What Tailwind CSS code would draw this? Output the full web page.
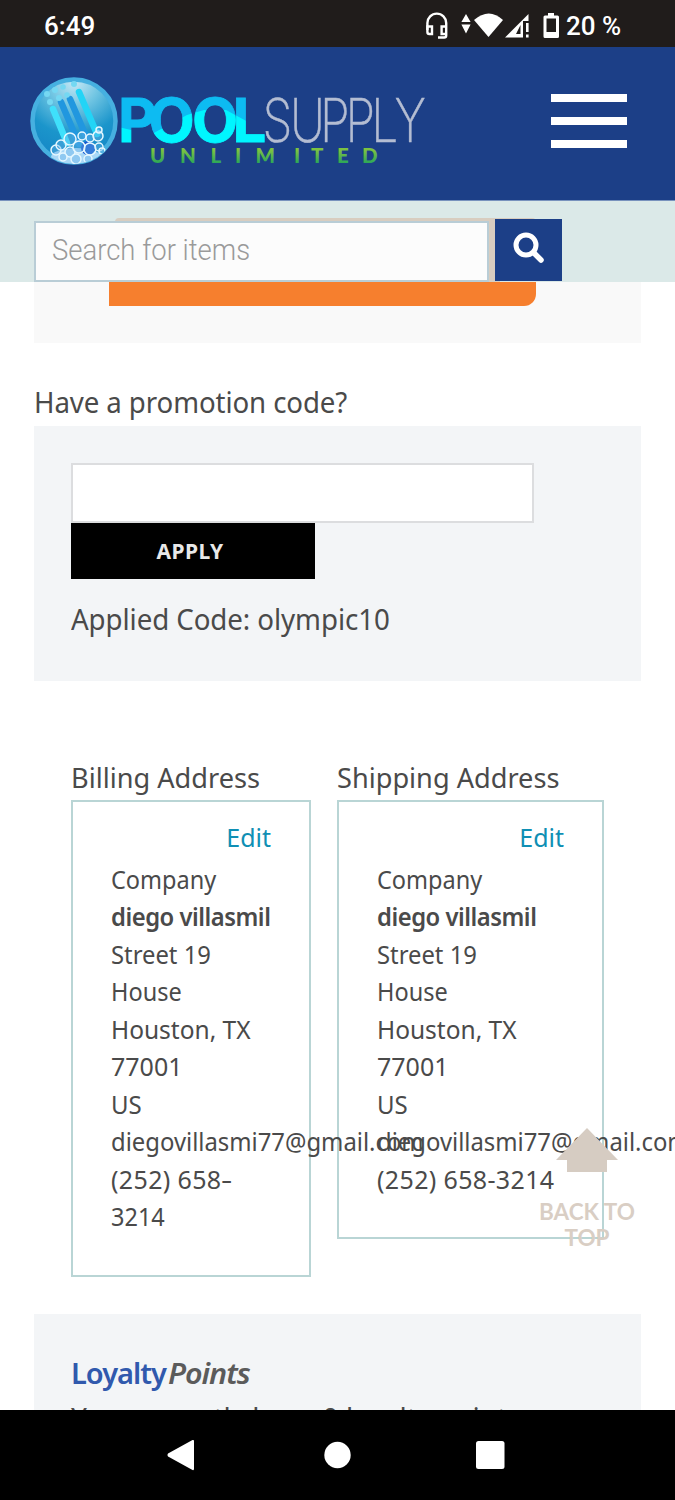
<!DOCTYPE html>
<html lang="en">
<head>
<meta charset="utf-8">
<meta name="viewport" content="width=device-width, initial-scale=1">
<title>Pool Supply Unlimited - Checkout</title>
<script src="https://cdn.jsdelivr.net/npm/@tailwindcss/browser@4"></script>
</head>
<body class="bg-white">
<div class="relative flex h-[1500px] w-[675px] flex-col overflow-hidden font-['Noto_Sans',sans-serif] text-[#4a4a4a]">

  <!-- Status bar -->
  <div class="flex h-[47px] shrink-0 items-center bg-[#201c1b] pt-1.5 pl-11 font-[Roboto,sans-serif] text-[26px] font-medium text-white">
    <span class="w-[382px]">6:49</span>
    <svg class="h-9 w-[138px] shrink-0" viewBox="426 9 138 36" fill="#fff">
      <g fill="none" stroke="#fff" stroke-width="2.4">
        <path d="M427.400 30V23a9.400 9.400 0 0 1 18.800 0V35.500q0 2-2 2H438"/>
        <path d="M427.400 26.500h4.600v7.500h-2.600q-2 0-2-2zM446.200 26.500h-4.600v7.500h4.600"/>
      </g>
      <path d="M466 14l4.600 8h-9.200zM466 33.500l4.600-9h-9.200z"/>
      <path d="M474 20q15-13 29 0L488.500 37z"/>
      <path fill-rule="evenodd" d="M505 37.500L528.500 14v7h-5.500v16.500zM516 34h4.500V25zM526 23h2.600v9H526zM526 34.500h2.600v3H526z"/>
      <path fill-rule="evenodd" d="M548 13h6v2.500h3.500q1.500 0 1.500 1.500v19.500q0 1.500-1.500 1.500H545q-1.500 0-1.500-1.500V17q0-1.500 1.500-1.500h3zM546.500 18.500V32h9.500V18.500z"/>
    </svg>
    <span class="ml-0.5 whitespace-nowrap">20 %</span>
  </div>

  <!-- Site header -->
  <header class="flex h-[154px] shrink-0 items-center justify-between border-b border-[#7892bd] bg-[#1c3f87] pr-12 pb-[5px] pl-6">
    <svg class="h-[110px] w-[410px]" viewBox="24 66 410 110">
      <defs>
        <radialGradient id="ball" cx=".5" cy=".02" r="1"><stop offset="0" stop-color="#c8e8f5"/><stop offset=".3" stop-color="#72c6e3"/><stop offset=".65" stop-color="#1b95cb"/><stop offset="1" stop-color="#1585c5"/></radialGradient>
        <pattern id="pool" patternUnits="userSpaceOnUse" x="110" y="80" width="170" height="90"><rect width="170" height="90" fill="#0dbbf2"/><path fill="#00f6ff" d="M0 45L21 50L40 55L77 35L94 30H116L140 43L170 49V90H0z"/></pattern>
        <linearGradient id="green" x1="0" y1="0" x2="0" y2="1"><stop offset=".3" stop-color="#7cc242"/><stop offset=".9" stop-color="#22a45a"/></linearGradient>
        <clipPath id="disc"><circle cx="74" cy="121" r="43"/></clipPath>
      </defs>
      <circle cx="74" cy="121" r="41.500" fill="url(#ball)" stroke="#46b0e0" stroke-width="4.500"/>
      <g clip-path="url(#disc)">
        <g stroke-linecap="round" stroke-width="6.500" fill="none">
          <path stroke="#3fe0fb" d="M53 109l14 34"/>
          <path stroke="#2197df" d="M61 102l18 42M70 99l19 44"/>
          <path stroke="#22d4f6" d="M79 92l18 42"/>
        </g>
        <g fill="#75d8f2"><circle cx="47" cy="94" r="3"/><circle cx="50" cy="102" r="3"/><circle cx="55" cy="90" r="3"/><circle cx="59" cy="98" r="3"/><circle cx="63" cy="87" r="2.800"/><circle cx="67" cy="95" r="2.800"/><circle cx="74" cy="84" r="3"/></g>
        <ellipse cx="76" cy="157" rx="25" ry="9" fill="#a9d8f7"/>
        <circle cx="88" cy="148" r="7" fill="#1457cf"/>
        <g fill="#68b4e8" fill-opacity=".4" stroke="#e5f7ff" stroke-width="1.500">
          <circle cx="56" cy="150" r="5"/><circle cx="61" cy="145" r="5"/><circle cx="70" cy="139" r="6"/><circle cx="70" cy="152" r="5"/><circle cx="79" cy="147" r="6"/><circle cx="82" cy="136" r="4"/><circle cx="90" cy="138" r="4"/><circle cx="98" cy="136" r="5"/><circle cx="99" cy="130" r="3"/><circle cx="90" cy="149" r="6"/><circle cx="99" cy="147" r="4"/><circle cx="63" cy="157" r="4"/><circle cx="76" cy="159" r="5"/><circle cx="88" cy="159" r="4"/><circle cx="102" cy="151" r="3"/>
        </g>
      </g>
      <text y="142" x="118 148.500 192 232.500" font-family="Inter, sans-serif" font-weight="700" font-size="60" fill="url(#pool)" stroke="url(#pool)" stroke-width=".8">POOL</text>
      <text transform="translate(264 142) scale(.8 1)" x="-2 32.500 70 102 134 163" y="0" font-family="Inter, sans-serif" font-weight="200" font-size="60" fill="#b4bdd2" stroke="#b4bdd2" stroke-width=".5">SUPPLY</text>
      <text x="150 180 210.500 235 255.500 294 311 337 362" y="163" font-family="Lato, sans-serif" font-weight="900" font-size="20.500" fill="url(#green)">UNLIMITED</text>
    </svg>
    <svg class="h-[54px] w-[76px]" viewBox="0 0 76 54" fill="#fff"><path d="M0 0h76v8H0zM0 23h76v8H0zM0 46h76v8H0z"/></svg>
  </header>

  <!-- Search strip -->
  <div class="relative flex h-[81px] shrink-0 bg-[#dbe9e8] pt-[18px] pl-[34px]">
    <div class="absolute top-[17px] left-[115px] h-1 w-[421px] rounded-t-sm bg-[#d8cdc0]"></div>
    <div class="absolute top-[18px] left-[480px] h-[63px] w-[20px] bg-[#d8cdc0]"></div>
    <div class="relative mt-0.5 flex h-[61px] w-[455px] items-center border-2 border-[#b9cdd6] bg-[#fcfcfc] pl-4 font-[Roboto,sans-serif] text-[29px] font-light text-[#9a9a9a]"><span class="-mt-0.5 origin-left scale-x-[0.947]">Search for items</span></div>
    <div class="relative ml-1.5 flex h-[62px] w-[67px] items-center justify-center bg-[#1c3f87]">
      <svg class="-mt-1 h-8 w-8" viewBox="0 0 32 32" fill="none" stroke="#fff"><circle cx="13" cy="13" r="10" stroke-width="5"/><path d="M21 21l7 7" stroke-width="5.500" stroke-linecap="round"/></svg>
    </div>
  </div>

  <!-- Page content -->
  <main class="flex h-[1128px] shrink-0 flex-col overflow-hidden px-[34px]">
    <div class="h-[61px] shrink-0 bg-[#f9f9f9] pl-[75px]">
      <div class="h-6 w-[427px] rounded-br-xl bg-[#f67f2e]"></div>
    </div>

    <h2 class="mt-[40px] h-[43px] shrink-0 origin-left scale-x-[0.97] text-[28.5px] leading-[38px] tracking-[-0.1px] whitespace-nowrap">Have a promotion code?</h2>
    <section class="h-[255px] shrink-0 bg-[#f3f5f7] px-[37px] pt-[37px]">
      <div class="h-[60px] w-[463px] border-2 border-[#dcdddf] bg-white"></div>
      <div class="flex h-14 w-[244px] items-center justify-center bg-black pt-0.5 pr-1.5 text-[21px] font-bold tracking-[0.4px] text-[#e8e8e8]">APPLY</div>
      <p class="mt-[21px] origin-left scale-x-[0.973] text-[28.5px] leading-[38px] tracking-[-0.1px] whitespace-nowrap">Applied Code: olympic10</p>
    </section>

    <section class="mt-[77px] flex h-[556px] shrink-0 gap-[26px] pl-[37px] text-[25px] leading-[37.5px]">
      <div class="w-[240px]">
        <h3 class="h-[42px] origin-left scale-x-[0.97] text-[28px] leading-[38px] whitespace-nowrap">Billing Address</h3>
        <div class="h-[477px] border-2 border-[#b9d5d5] px-[38px] pt-[17px]">
          <div class="mb-1 text-right text-[#0f8fb4]">Edit</div>
          <div class="whitespace-nowrap">
            <div class="origin-left scale-x-[0.94]">Company</div>
            <div class="origin-left scale-x-[0.952] font-semibold tracking-[-0.5px]">diego villasmil</div>
            <div class="origin-left scale-x-[0.952]">Street 19</div>
            <div class="origin-left scale-x-[0.94]">House</div>
            <div class="origin-left scale-x-[0.98]">Houston, TX</div>
            <div>77001</div>
            <div class="origin-left scale-x-[0.96]">US</div>
            <div class="origin-left scale-x-[0.954]">diegovillasmi77@gmail.com</div>
            <div class="flex tracking-[0.35px]">(252) 658<span class="origin-left scale-x-[1.4]">-</span></div>
            <div class="origin-left scale-x-[0.94]">3214</div>
          </div>
        </div>
      </div>
      <div class="w-[267px]">
        <h3 class="h-[42px] origin-left scale-x-[0.97] text-[28px] leading-[38px] whitespace-nowrap">Shipping Address</h3>
        <div class="h-[439px] border-2 border-[#b9d5d5] px-[38px] pt-[17px]">
          <div class="mb-1 text-right text-[#0f8fb4]">Edit</div>
          <div class="whitespace-nowrap">
            <div class="origin-left scale-x-[0.94]">Company</div>
            <div class="origin-left scale-x-[0.952] font-semibold tracking-[-0.5px]">diego villasmil</div>
            <div class="origin-left scale-x-[0.952]">Street 19</div>
            <div class="origin-left scale-x-[0.94]">House</div>
            <div class="origin-left scale-x-[0.98]">Houston, TX</div>
            <div>77001</div>
            <div class="origin-left scale-x-[0.96]">US</div>
            <div class="origin-left scale-x-[0.954]">diegovillasmi77@gmail.com</div>
            <div class="tracking-[0.35px]">(252) 658-3214</div>
          </div>
        </div>
      </div>
    </section>

    <section class="h-[200px] shrink-0 bg-[#f3f5f7] px-[37px] pt-[40px]">
      <div class="flex text-[29px] leading-[38px] font-semibold tracking-[-1px]"><span class="w-[97px] origin-left text-[#3059ad]">Loyalty</span><span class="origin-left scale-x-[1.05] text-[#5b5b5b] italic">Points</span></div>
      <p class="mt-[6px] text-[28px] leading-[38px] whitespace-nowrap">You currently have 0 loyalty points</p>
    </section>
  </main>

  <!-- Android navigation bar -->
  <nav class="h-[90px] shrink-0 bg-black">
    <svg class="h-[90px] w-[675px]" viewBox="0 0 675 90" fill="#fff"><path d="M168 43.500L192.500 30q1.500-.5 1.500 1V59q0 1.500-1.500 1L168 46.500q-1.200-1.500 0-3z"/><circle cx="337.500" cy="45" r="13.200"/><rect x="476" y="31" width="28.500" height="28" rx="2.500"/></svg>
  </nav>

  <!-- Floating back-to-top link -->
  <div class="absolute top-[1128px] left-[532px] flex w-[110px] flex-col items-center text-center font-[Lato,sans-serif] text-[22.5px] leading-[26px] font-bold text-[#d9cec4]">
    <svg class="mb-[27px] h-11 w-[62px]" viewBox="0 0 62 44" fill="#d6ccc2"><path d="M31 0L62 32H51V44H11V32H0z"/></svg>
    <span class="whitespace-nowrap">BACK TO<br>TOP</span>
  </div>
</div>
</body>
</html>
